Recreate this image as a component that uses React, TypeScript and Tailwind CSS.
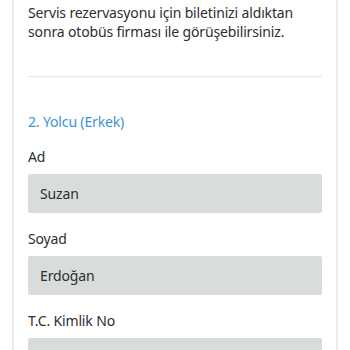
import React from "react";

export default function App() {
  const fields = [
    { label: "Ad", value: "Suzan" },
    { label: "Soyad", value: "Erdoğan" },
    { label: "T.C. Kimlik No", value: "" },
  ];
  return (
    <div className="w-[350px] h-[350px] overflow-hidden bg-white px-3 tracking-[-0.15px]" style={{ fontFamily: '"Noto Sans", sans-serif' }}>
      <div className="border-x-2 border-[#ececec] px-[14px] h-full">
        <p className="text-[14px] leading-[19px] text-[#2e2e2e] pt-[3px]">
          Servis rezervasyonu için biletinizi aldıktan sonra otobüs firması ile görüşebilirsiniz.
        </p>
        <div className="mt-[35px] h-px bg-[#e6e6e6]" />
        <h2 className="mt-[35px] text-[14px] leading-[20px] text-[#3b93d9]">2. Yolcu (Erkek)</h2>
        <div className="mt-[15px] flex flex-col gap-[16px]">
          {fields.map((f) => (
            <div key={f.label} className="flex flex-col gap-[7px]">
              <label className="text-[14px] leading-[20px] text-[#2e2e2e]">{f.label}</label>
              <div className="h-[39px] rounded-[2px] bg-[#d8dcdb] flex items-center px-3 text-[14px] text-[#2e2e2e]">
                {f.value}
              </div>
            </div>
          ))}
        </div>
      </div>
    </div>
  );
}
